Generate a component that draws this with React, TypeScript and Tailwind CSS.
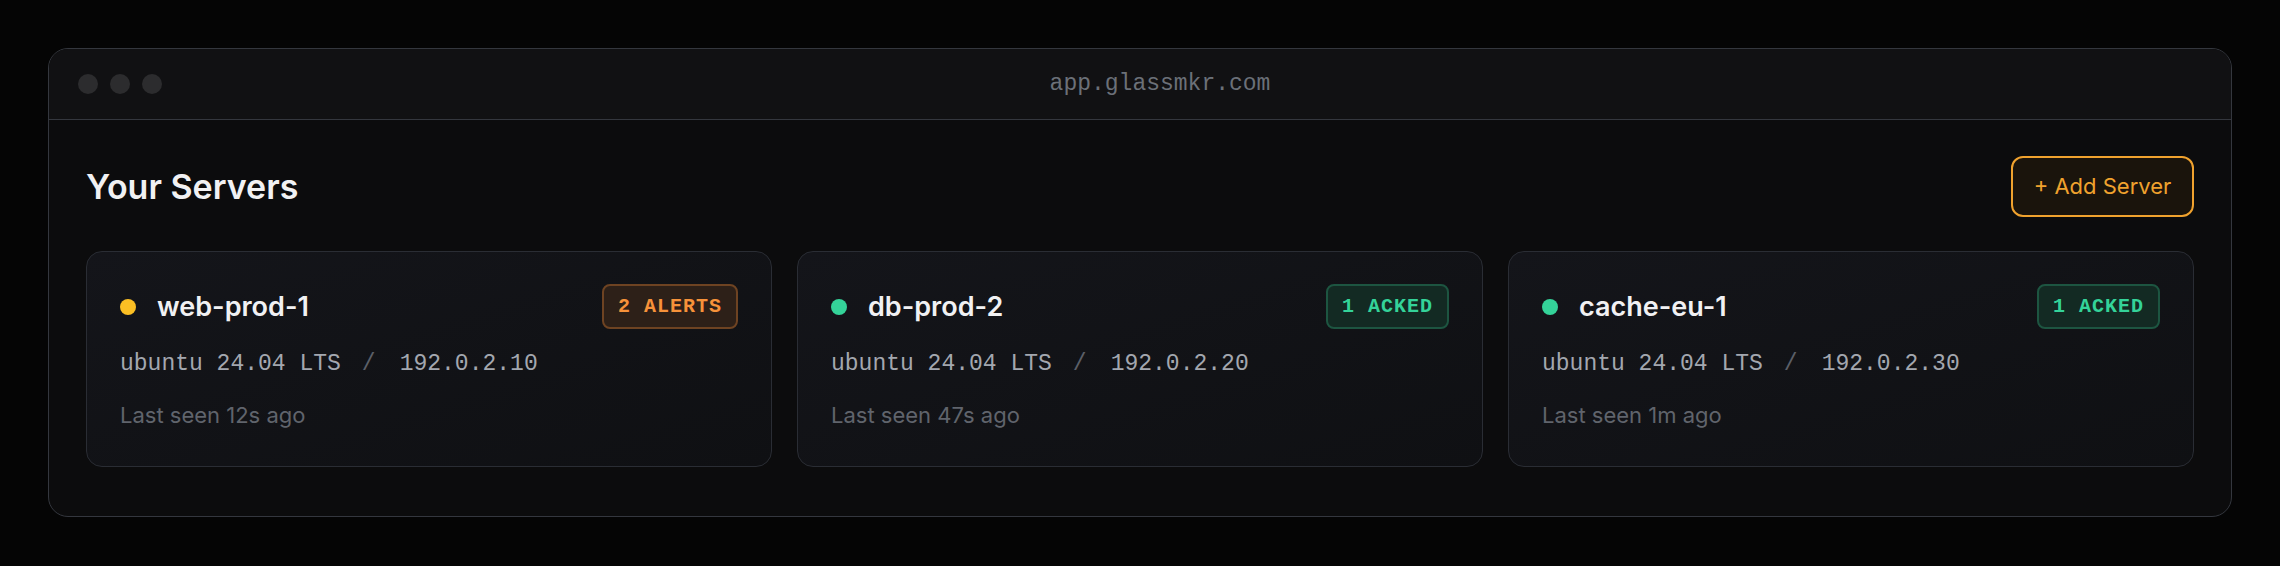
import React from "react";

type Server = {
  name: string;
  ip: string;
  seen: string;
  status: "warn" | "ok";
  badge: string;
};

const servers: Server[] = [
  { name: "web-prod-1", ip: "192.0.2.10", seen: "Last seen 12s ago", status: "warn", badge: "2 ALERTS" },
  { name: "db-prod-2", ip: "192.0.2.20", seen: "Last seen 47s ago", status: "ok", badge: "1 ACKED" },
  { name: "cache-eu-1", ip: "192.0.2.30", seen: "Last seen 1m ago", status: "ok", badge: "1 ACKED" },
];

const sans = "font-['Inter','Liberation_Sans',sans-serif]";
const mono = "font-['Liberation_Mono','DejaVu_Sans_Mono',monospace]";

function ServerCard({ server }: { server: Server }) {
  const warn = server.status === "warn";
  return (
    <div className="h-[216px] rounded-[16px] border border-[#2a2d34] bg-gradient-to-br from-[#14151a] to-[#0f1013] px-[33px] pt-[32px]">
      <div className="flex h-[45px] items-center justify-between">
        <div className="flex items-center gap-[21px]">
          <span className={`h-[16px] w-[16px] rounded-full ${warn ? "bg-[#fbbf24]" : "bg-[#34d399]"}`} />
          <span className={`${sans} text-[27px] font-semibold leading-none text-[#f1f1f3]`}>{server.name}</span>
        </div>
        <span
          className={`${mono} flex h-[45px] items-center rounded-[8px] border-2 px-[14px] text-[20px] font-bold tracking-[1px] ${
            warn
              ? "border-[#6e4322] bg-[#2d2018] text-[#f7923a]"
              : "border-[#1d5541] bg-[#132a23] text-[#34d399]"
          }`}
        >
          {server.badge}
        </span>
      </div>
      <div className={`${mono} mt-[21px] text-[23px] leading-[28px] text-[#a3a7af]`}>
        ubuntu 24.04 LTS
        <span className="ml-[21px] mr-[24px] text-[#5b5f67]">/</span>
        {server.ip}
      </div>
      <div className={`${sans} mt-[23px] text-[22px] leading-[28px] text-[#60646c]`}>{server.seen}</div>
    </div>
  );
}

export default function App() {
  return (
    <div className="h-[566px] w-full bg-[#050505] px-[48px] pt-[48px]">
      <div className="overflow-hidden rounded-[20px] border border-[#34373e] bg-[#0c0c0d]">
        <div className="flex h-[71px] items-center border-b border-[#34373e] bg-[#111113] px-[29px]">
          <div className="flex gap-[12px]">
            <span className="h-[20px] w-[20px] rounded-full bg-[#2c2c2e]" />
            <span className="h-[20px] w-[20px] rounded-full bg-[#2c2c2e]" />
            <span className="h-[20px] w-[20px] rounded-full bg-[#2c2c2e]" />
          </div>
          <div className={`${mono} flex-1 pr-[44px] text-center text-[23px] text-[#6b7078]`}>app.glassmkr.com</div>
        </div>
        <div className="px-[37px] pb-[49px] pt-[36px]">
          <div className="flex h-[61px] items-center justify-between">
            <h1 className={`${sans} text-[34px] font-semibold text-[#f1f1f3]`}>Your Servers</h1>
            <button className={`${sans} h-[61px] w-[183px] rounded-[12px] border-2 border-[#f0a22e] bg-[#1a140c] text-[22px] text-[#f0a22e]`}>
              + Add Server
            </button>
          </div>
          <div className="mt-[34px] grid grid-cols-3 gap-[25px]">
            {servers.map((s) => (
              <ServerCard key={s.name} server={s} />
            ))}
          </div>
        </div>
      </div>
    </div>
  );
}
